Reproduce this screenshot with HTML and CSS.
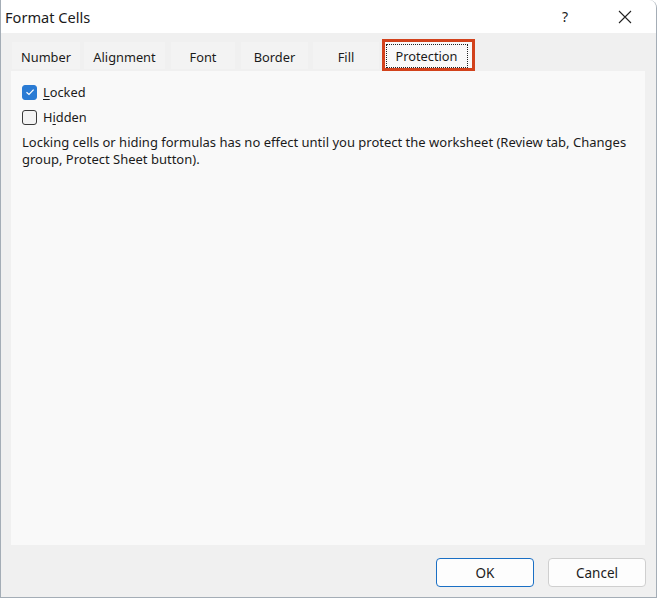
FILE: index.html
```html
<!DOCTYPE html>
<html>
<head>
<meta charset="utf-8">
<link rel="stylesheet" href="styles.css">
</head>
<body>
<div class="window">
  <div class="titlebar">
    <span class="title">Format Cells</span>
    <div class="title-buttons">
      <span class="help">?</span>
      <svg class="close" width="14" height="14" viewBox="0 0 14 14"><path d="M1 1L13 13M13 1L1 13" stroke="#222" stroke-width="1.1" fill="none"/></svg>
    </div>
  </div>
  <div class="body">
    <div class="tabs">
      <div class="tab tab-number">Number</div>
      <div class="tab tab-alignment">Alignment</div>
      <div class="tab tab-font">Font</div>
      <div class="tab tab-border">Border</div>
      <div class="tab tab-fill">Fill</div>
      <div class="tab tab-protection"><span class="focus">Protection</span></div>
    </div>
    <div class="panel">
      <label class="check-row">
        <span class="box checked"><svg width="10" height="8" viewBox="0 0 10 8"><path d="M1.5 4.2L4 6.4L8.6 1.6" stroke="#fff" stroke-width="1.2" fill="none"/></svg></span>
        <span class="label"><u>L</u>ocked</span>
      </label>
      <label class="check-row">
        <span class="box"></span>
        <span class="label">H<u>i</u>dden</span>
      </label>
      <p class="desc">Locking cells or hiding formulas has no effect until you protect the worksheet (Review tab, Changes group, Protect Sheet button).</p>
    </div>
    <div class="footer">
      <button class="btn btn-ok">OK</button>
      <button class="btn">Cancel</button>
    </div>
  </div>
</div>
</body>
</html>
```
FILE: styles.css
```css
html, body {
  margin: 0;
  padding: 0;
  background: #ffffff;
}
body {
  width: 657px;
  height: 598px;
  font-family: "Noto Sans", "Open Sans", sans-serif;
  color: #1b1b1b;
}
.window {
  box-sizing: border-box;
  width: 657px;
  height: 598px;
  border: 1px solid #a4adb6;
  border-top: none;
  border-top-right-radius: 8px;
  display: flex;
  flex-direction: column;
  background: #f0f0f0;
  overflow: hidden;
}
.titlebar {
  height: 33px;
  background: #ffffff;
  display: flex;
  align-items: center;
  justify-content: space-between;
  padding-left: 4px;
}
.title {
  font-size: 14.6px;
  color: #1b1b1b;
}
.title-buttons {
  display: flex;
  align-items: center;
}
.help {
  font-size: 14px;
  width: 14px;
  text-align: center;
  margin-right: 46px;
}
.close {
  margin-right: 24px;
}
.body {
  flex: 1;
  display: flex;
  flex-direction: column;
}
.tabs {
  height: 38px;
  display: flex;
  align-items: flex-end;
  padding-left: 11px;
  box-sizing: border-box;
}
.tab {
  height: 27px;
  margin-bottom: 2px;
  background: #f3f3f3;
  font-size: 12.8px;
  display: flex;
  align-items: center;
  justify-content: center;
  box-sizing: border-box;
  padding-top: 2px;
}
.tab-number { width: 68px; }
.tab-alignment { width: 81px; margin-left: 4px; }
.tab-font { width: 64px; margin-left: 6px; }
.tab-border { width: 67px; margin-left: 6px; }
.tab-fill { width: 66px; margin-left: 5px; }
.tab-protection {
  width: 93px;
  height: 32px;
  margin-left: 3px;
  margin-bottom: 0;
  padding-top: 1px;
  padding-right: 3px;
  border: 3px solid #d2421c;
  background: #f9f9f9;
}
.focus {
  border: 1px dotted #222;
  padding: 2px 9px 2px 8px;
}
.panel {
  flex: 1;
  margin: 0 11px 0 10px;
  background: #f9f9f9;
  padding: 13px 11px;
}
.check-row {
  display: flex;
  align-items: center;
  height: 16px;
  margin-bottom: 9px;
}
.box {
  box-sizing: border-box;
  width: 15px;
  height: 15px;
  border: 1px solid #3a3a3a;
  border-radius: 3px;
  background: #f3f3f3;
  display: flex;
  align-items: center;
  justify-content: center;
}
.box.checked {
  background: #2a7bd4;
  border-color: #2a7bd4;
}
.label {
  margin-left: 6px;
  font-size: 12.8px;
}
.label u {
  text-decoration-thickness: 1px;
  text-underline-offset: 2px;
}
.desc {
  margin: 6px 0 0 0;
  font-size: 13px;
  line-height: 17px;
}
.footer {
  height: 52px;
  display: flex;
  justify-content: flex-end;
  align-items: flex-start;
  padding-top: 13px;
  padding-right: 10px;
  box-sizing: border-box;
  gap: 14px;
}
.btn {
  width: 98px;
  height: 29px;
  border: 1px solid #cfcfcf;
  border-radius: 4px;
  background: #fdfdfd;
  font-family: "Noto Sans", "Open Sans", sans-serif;
  font-size: 13.5px;
  color: #1b1b1b;
  padding: 0;
}
.btn-ok {
  border-color: #1a6fc4;
}
```
